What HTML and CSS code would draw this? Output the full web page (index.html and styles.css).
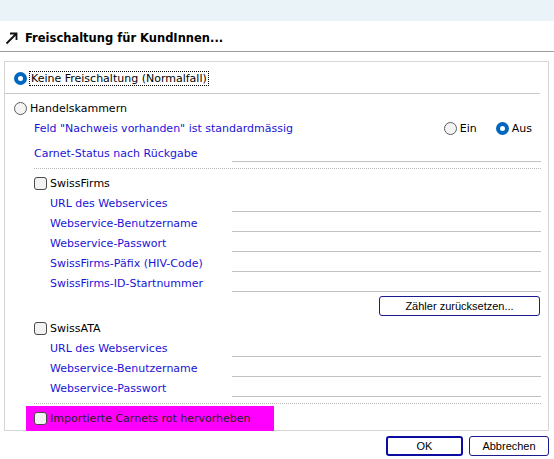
FILE: index.html
```html
<!DOCTYPE html>
<html lang="de">
<head>
<meta charset="utf-8">
<title>Freischaltung</title>
<link rel="stylesheet" href="styles.css">
</head>
<body>
<div class="topbar"></div>
<div class="title">
  <svg class="arrow" width="14" height="14" viewBox="0 0 14 14"><path d="M1.5 12.5 L11.5 2.5 M5 2.5 H11.5 V9" fill="none" stroke="#111" stroke-width="1.8"/></svg>
  <span>Freischaltung für KundInnen...</span>
</div>
<div class="group">
  <div class="row first">
    <span class="radio on"></span><span class="focus">Keine Freischaltung (Normalfall)</span>
  </div>
  <div class="hr"></div>
  <div class="row hk">
    <span class="radio"></span><span class="txt">Handelskammern</span>
  </div>
  <div class="section">
    <div class="row">
      <span class="lbl grow">Feld "Nachweis vorhanden" ist standardmässig</span>
      <span class="opt ein"><span class="radio"></span><span class="txt">Ein</span></span>
      <span class="opt aus"><span class="radio on"></span><span class="txt">Aus</span></span>
    </div>
    <div class="row field-row carnet">
      <span class="lbl lw0">Carnet-Status nach Rückgabe</span><span class="field"></span>
    </div>
    <div class="dots"></div>
    <div class="row cb-row">
      <span class="check"></span><span class="txt">SwissFirms</span>
    </div>
    <div class="row field-row"><span class="lbl lw">URL des Webservices</span><span class="field"></span></div>
    <div class="row field-row"><span class="lbl lw">Webservice-Benutzername</span><span class="field"></span></div>
    <div class="row field-row"><span class="lbl lw">Webservice-Passwort</span><span class="field"></span></div>
    <div class="row field-row"><span class="lbl lw">SwissFirms-Päfix (HIV-Code)</span><span class="field"></span></div>
    <div class="row field-row"><span class="lbl lw">SwissFirms-ID-Startnummer</span><span class="field"></span></div>
    <div class="btn-row"><button class="btn wide">Zähler zurücksetzen...</button></div>
    <div class="row cb-row ata">
      <span class="check"></span><span class="txt">SwissATA</span>
    </div>
    <div class="row field-row"><span class="lbl lw">URL des Webservices</span><span class="field"></span></div>
    <div class="row field-row"><span class="lbl lw">Webservice-Benutzername</span><span class="field"></span></div>
    <div class="row field-row"><span class="lbl lw">Webservice-Passwort</span><span class="field"></span></div>
    <div class="dots dots2"></div>
  </div>
  <div class="highlight">
    <span class="check"></span><span class="txt">Importierte Carnets rot hervorheben</span>
  </div>
</div>
<div class="footer">
  <button class="btn ok">OK</button>
  <button class="btn cancel">Abbrechen</button>
</div>
</body>
</html>
```
FILE: styles.css
```css
* { box-sizing: border-box; }
html, body { margin: 0; padding: 0; }
body {
  width: 554px;
  height: 459px;
  background: #fff;
  font-family: "DejaVu Sans", Verdana, sans-serif;
  font-size: 11px;
  color: #000;
  overflow: hidden;
}
.topbar {
  height: 21px;
  background: #eaf3f7;
}
.title {
  height: 31px;
  border-bottom: 1px solid #9c9c9c;
  display: flex;
  align-items: center;
  padding-left: 5px;
  padding-top: 3px;
}
.title .arrow { margin-right: 6px; flex: none; }
.title span {
  font-weight: bold;
  font-size: 11.5px;
}
.group {
  margin: 9px 0 0 4px;
  width: 545px;
  height: 370px;
  border: 1px solid #d6d6d6;
  padding-top: 6px;
}
.row {
  height: 20px;
  display: flex;
  align-items: center;
}
.row.first { padding-left: 9px; }
.row.hk { padding-left: 9px; margin-top: 4px; }
.txt { margin-left: 3px; white-space: nowrap; }
.focus {
  margin-left: 2px;
  padding: 0 1px;
  border: 1px dotted #000;
  height: 15px;
  line-height: 13px;
  white-space: nowrap;
}
.hr {
  margin: 5px 8px 0 0;
  height: 1px;
  background: #c8c8c8;
}
.radio {
  width: 13px;
  height: 13px;
  border-radius: 50%;
  border: 1px solid #5e5e5e;
  background: #f4f4f4;
  flex: none;
}
.radio.on {
  border: 4px solid #0067c0;
  background: #fff;
}
.check {
  width: 13px;
  height: 13px;
  border-radius: 3px;
  border: 1px solid #4a4a4a;
  background: #f2f2f2;
  flex: none;
}
.section {
  padding-left: 29px;
  padding-right: 7px;
}
.lbl { color: #1a14d6; white-space: nowrap; }
.grow { flex: 1; }
.opt { display: flex; align-items: center; }
.ein { margin-right: 19px; }
.aus { margin-right: 9px; }
.field-row { align-items: stretch; }
.field-row .lbl { display: flex; align-items: center; }
.lw0 { width: 198px; }
.lw { width: 182px; margin-left: 16px; }
.field {
  flex: 1;
  border-bottom: 1px solid #c2c2c2;
  margin-bottom: 1px;
}
.carnet { margin-top: 5px; }
.dots {
  margin-top: 5px;
  height: 1px;
  border-top: 1px dotted #b8b8b8;
}
.cb-row { margin-top: 4px; }
.ata { margin-top: 2px; }
.btn-row {
  display: flex;
  justify-content: flex-end;
  margin-top: 3px;
  padding-right: 1px;
}
.btn {
  font-family: "Liberation Sans", Arial, sans-serif;
  font-size: 11px;
  color: #000;
  background: #fff;
  border: 1px solid #1a1a8c;
  border-radius: 3px;
  height: 20px;
  padding: 0;
  margin: 0;
}
.wide { width: 161px; }
.highlight {
  position: relative;
  margin: 2px 0 -1px 21px;
  width: 248px;
  height: 25px;
  background: #ff00ff;
  display: flex;
  align-items: center;
  padding-left: 8px;
  color: #222;
}
.footer {
  display: flex;
  justify-content: flex-end;
  gap: 6px;
  padding-right: 5px;
  margin-top: 5px;
}
.ok {
  width: 77px;
  height: 20px;
  border: 2px solid #0c0ca0;
}
.cancel {
  width: 80px;
  height: 20px;
}
```
